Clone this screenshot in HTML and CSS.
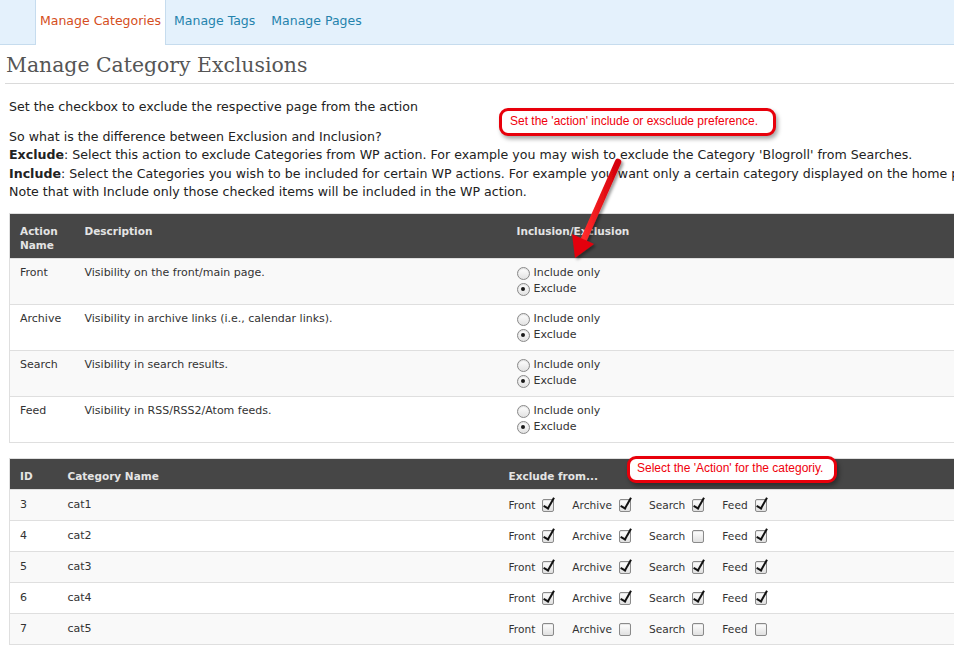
FILE: index.html
```html
<!DOCTYPE html>
<html>
<head>
<meta charset="utf-8">
<title>Manage Category Exclusions</title>
<link rel="stylesheet" href="styles.css">
</head>
<body>
<nav class="tabs">
  <a class="tab active">Manage Categories</a>
  <a class="tab">Manage Tags</a>
  <a class="tab">Manage Pages</a>
</nav>
<main class="wrap">
  <h2 class="title">Manage Category Exclusions</h2>
  <p class="intro">Set the checkbox to exclude the respective page from the action</p>
  <p class="help">So what is the difference between Exclusion and Inclusion?<br>
  <b>Exclude</b>: Select this action to exclude Categories from WP action. For example you may wish to exclude the Category 'Blogroll' from Searches.<br>
  <b>Include</b>: Select the Categories you wish to be included for certain WP actions. For example you want only a certain category displayed on the home page.<br>
  Note that with Include only those checked items will be included in the WP action.</p>

  <table class="grid actions">
    <colgroup><col class="c-a1"><col class="c-a2"><col></colgroup>
    <thead>
      <tr><th>Action Name</th><th>Description</th><th>Inclusion/Exclusion</th></tr>
    </thead>
    <tbody>
      <tr class="alt"><td>Front</td><td>Visibility on the front/main page.</td>
        <td><label class="opt"><span class="radio"></span>Include only</label><label class="opt"><span class="radio on"></span>Exclude</label></td></tr>
      <tr><td>Archive</td><td>Visibility in archive links (i.e., calendar links).</td>
        <td><label class="opt"><span class="radio"></span>Include only</label><label class="opt"><span class="radio on"></span>Exclude</label></td></tr>
      <tr class="alt"><td>Search</td><td>Visibility in search results.</td>
        <td><label class="opt"><span class="radio"></span>Include only</label><label class="opt"><span class="radio on"></span>Exclude</label></td></tr>
      <tr><td>Feed</td><td>Visibility in RSS/RSS2/Atom feeds.</td>
        <td><label class="opt"><span class="radio"></span>Include only</label><label class="opt"><span class="radio on"></span>Exclude</label></td></tr>
    </tbody>
  </table>

  <table class="grid cats">
    <colgroup><col class="c-b1"><col class="c-b2"><col></colgroup>
    <thead>
      <tr><th>ID</th><th>Category Name</th><th>Exclude from...</th></tr>
    </thead>
    <tbody>
      <tr class="alt"><td>3</td><td>cat1</td><td class="checks">
        <span class="ck">Front<span class="cb on"></span></span><span class="ck">Archive<span class="cb on"></span></span><span class="ck">Search<span class="cb on"></span></span><span class="ck">Feed<span class="cb on"></span></span></td></tr>
      <tr><td>4</td><td>cat2</td><td class="checks">
        <span class="ck">Front<span class="cb on"></span></span><span class="ck">Archive<span class="cb on"></span></span><span class="ck">Search<span class="cb"></span></span><span class="ck">Feed<span class="cb on"></span></span></td></tr>
      <tr class="alt"><td>5</td><td>cat3</td><td class="checks">
        <span class="ck">Front<span class="cb on"></span></span><span class="ck">Archive<span class="cb on"></span></span><span class="ck">Search<span class="cb on"></span></span><span class="ck">Feed<span class="cb on"></span></span></td></tr>
      <tr><td>6</td><td>cat4</td><td class="checks">
        <span class="ck">Front<span class="cb on"></span></span><span class="ck">Archive<span class="cb on"></span></span><span class="ck">Search<span class="cb on"></span></span><span class="ck">Feed<span class="cb on"></span></span></td></tr>
      <tr class="alt"><td>7</td><td>cat5</td><td class="checks">
        <span class="ck">Front<span class="cb"></span></span><span class="ck">Archive<span class="cb"></span></span><span class="ck">Search<span class="cb"></span></span><span class="ck">Feed<span class="cb"></span></span></td></tr>
    </tbody>
  </table>
</main>

<div class="callout callout-1">Set the 'action' include or exsclude preference.</div>
<div class="callout callout-2">Select the 'Action' for the categoriy.</div>

<svg class="arrow" width="954" height="649" viewBox="0 0 954 649">
  <defs>
    <filter id="sh" x="-50%" y="-50%" width="200%" height="200%">
      <feDropShadow dx="2" dy="2" stdDeviation="1.6" flood-color="#000" flood-opacity="0.4"/>
    </filter>
    <linearGradient id="rg" x1="0" y1="0" x2="1" y2="0">
      <stop offset="0" stop-color="#ff2a2a"/>
      <stop offset="1" stop-color="#d4000a"/>
    </linearGradient>
  </defs>
  <g filter="url(#sh)">
    <line x1="618" y1="162" x2="584" y2="239" stroke="url(#rg)" stroke-width="6.5" stroke-linecap="round"/>
    <polygon points="575,258 572,234 594,244" fill="#e4000c"/>
  </g>
</svg>
</body>
</html>
```

FILE: styles.css
```css
html, body {
  margin: 0;
  padding: 0;
  background: #fff;
}
body {
  position: relative;
  overflow: hidden;
  width: 954px;
  height: 649px;
  font-family: "DejaVu Sans", "Noto Sans", sans-serif;
  color: #333;
}

/* tabs */
.tabs {
  display: flex;
  height: 44px;
  background: #e4f1fc;
  border-bottom: 1px solid #c6dcee;
  padding-left: 35px;
}
.tab {
  display: block;
  padding: 0 8px;
  line-height: 42px;
  font-size: 12.5px;
  color: #2583ad;
}
.tab.active {
  background: #fff;
  color: #d54e21;
  border-left: 1px solid #c6dcee;
  border-right: 1px solid #c6dcee;
  padding: 0 4px 0 4px;
  margin-bottom: -1px;
  height: 45px;
}

/* content */
.wrap {
  padding-left: 5px;
}
.title {
  margin: 0;
  padding: 5px 0 3px 1px;
  font-family: "DejaVu Serif", Georgia, serif;
  font-weight: normal;
  font-size: 20.4px;
  line-height: 30px;
  color: #555;
  border-bottom: 1px solid #dadada;
}
.intro, .help {
  margin: 0 0 0 4px;
  font-size: 12.6px;
  line-height: 18px;
  color: #222;
}
.intro {
  margin-top: 14px;
}
.help {
  margin-top: 12px;
  white-space: nowrap;
  line-height: 18.3px;
}
.help b { font-weight: bold; }

/* tables */
.grid {
  margin-left: 4px;
  width: 1000px;
  table-layout: fixed;
  border-collapse: collapse;
  border: 1px solid #dfdfdf;
  font-size: 11px;
  color: #333;
}
.grid th {
  background: #464646;
  color: #e4e4e4;
  font-weight: bold;
  font-size: 10.5px;
  text-align: left;
  vertical-align: top;
}
.grid td {
  vertical-align: top;
  border-top: 1px solid #dfdfdf;
}
.grid tr.alt td {
  background: #f9f9f9;
}

.actions {
  margin-top: 12px;
}
.c-a1 { width: 65px; }
.c-a2 { width: 432px; }
.actions th {
  padding: 10px 10px 6px;
  line-height: 14px;
}
.actions td {
  padding: 6px 10px 7px;
  line-height: 16px;
}
.opt {
  display: flex;
  align-items: center;
  height: 16px;
}
.radio {
  position: relative;
  display: inline-block;
  width: 11px;
  height: 11px;
  border: 1px solid #8a8a8a;
  border-radius: 50%;
  background: linear-gradient(#fff, #e2e2e2);
  margin: 0 4px 0 0;
  box-shadow: inset 0 1px 1px rgba(0,0,0,0.12);
}
.radio.on::after {
  content: "";
  position: absolute;
  left: 3.5px;
  top: 3.5px;
  width: 4px;
  height: 4px;
  border-radius: 50%;
  background: #1a1a1a;
}

.cats {
  margin-top: 15px;
}
.c-b1 { width: 48px; }
.c-b2 { width: 441px; }
.cats th {
  padding: 10px 10px 6px;
  line-height: 14px;
}
.cats td {
  padding: 8px 10px 8px;
  line-height: 14px;
}
.checks {
  white-space: nowrap;
  font-size: 10.6px;
}
.ck {
  display: inline-flex;
  align-items: center;
  margin-right: 18px;
}
.cb {
  position: relative;
  display: inline-block;
  width: 10px;
  height: 11px;
  margin-left: 7px;
  border: 1px solid #8a8a8a;
  border-radius: 2px;
  background: linear-gradient(#fff, #e0e0e0);
  box-shadow: inset 0 1px 1px rgba(0,0,0,0.1);
}
.cb.on::after {
  content: "";
  position: absolute;
  left: 3px;
  top: -4px;
  width: 4px;
  height: 11px;
  border-right: 2px solid #111;
  border-bottom: 2px solid #111;
  transform: rotate(30deg);
  transform-origin: center;
}

/* annotations over the page */
.callout {
  position: absolute;
  background: #fff;
  border: 3px solid #e8000b;
  border-radius: 9px;
  box-shadow: 2px 3px 4px rgba(0,0,0,0.35);
  font-family: "Liberation Sans", Arial, sans-serif;
  font-size: 12px;
  line-height: 14px;
  color: #f0000c;
  white-space: nowrap;
  box-sizing: border-box;
}
.callout-1 {
  left: 499px;
  top: 108px;
  width: 277px;
  height: 28px;
  padding: 3px 0 0 8px;
}
.callout-2 {
  left: 627px;
  top: 456px;
  width: 210px;
  height: 27px;
  padding: 2px 0 0 7px;
}
.arrow {
  position: absolute;
  left: 0;
  top: 0;
  pointer-events: none;
}
```
